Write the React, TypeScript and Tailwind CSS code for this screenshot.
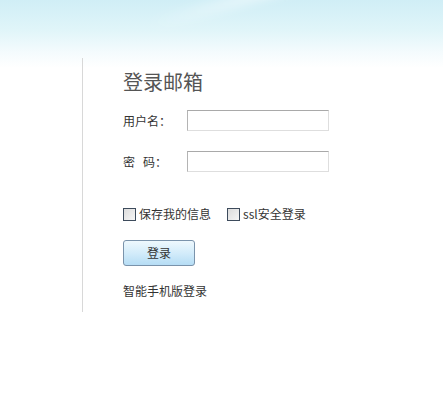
import React from "react";

const font = { fontFamily: '"Noto Sans CJK SC", "Noto Sans", sans-serif' };

function Check({ label }: { label: string }) {
  return (
    <label className="flex items-center text-[12px] leading-[14px] text-[#333]">
      <span className="block h-[13px] w-[13px] border border-[#3d4b5c] bg-[linear-gradient(135deg,#dcdcdc,#f6f6f6)]" />
      <span className="ml-[3px]">{label}</span>
    </label>
  );
}

export default function App() {
  return (
    <div
      className="relative h-[412px] w-[443px] overflow-hidden bg-white bg-[linear-gradient(180deg,#d0eef6_0px,#e0f5f9_30px,#f4fbfd_52px,#ffffff_68px)]"
      style={font}
    >
      <div className="pointer-events-none absolute left-[140px] top-[-30px] h-[14px] w-[360px] rotate-[-16deg] bg-[linear-gradient(90deg,rgba(255,255,255,0),rgba(255,255,255,0.7),rgba(255,255,255,0))] blur-[4px]" />
      <div className="relative pl-[82px] pt-[58px]">
        <div className="h-[254px] border-l border-[#d8d8d8] pl-[40px] pt-[12px]">
          <div className="text-[20px] leading-[24px] text-[#555]">登录邮箱</div>
          <div className="mt-[16px] flex items-center">
            <div className="w-[64px] text-[12px] leading-[14px] text-[#333]">
              用户名：
            </div>
            <div className="h-[21px] w-[142px] border border-t-[#a9a9a9] border-l-[#b4b4b4] border-r-[#dedede] border-b-[#dedede] bg-white" />
          </div>
          <div className="mt-[20px] flex items-center">
            <div className="flex w-[64px] text-[12px] leading-[14px] text-[#333]">
              <span>密</span>
              <span className="ml-[8px]">码：</span>
            </div>
            <div className="h-[21px] w-[142px] border border-t-[#a9a9a9] border-l-[#b4b4b4] border-r-[#dedede] border-b-[#dedede] bg-white" />
          </div>
          <div className="mt-[35px] flex items-center">
            <Check label="保存我的信息" />
            <div className="ml-[16px]">
              <Check label="ssl安全登录" />
            </div>
          </div>
          <button className="mt-[19px] flex h-[26px] w-[72px] items-center justify-center rounded-[3px] border border-[#7a93ab] bg-[linear-gradient(180deg,#eef8fd_0%,#d3ecfa_50%,#b6ddf5_100%)] text-[12px] leading-[14px] text-[#333]">
            登录
          </button>
          <div className="mt-[18px] text-[12px] leading-[14px] text-[#333]">智能手机版登录</div>
        </div>
      </div>
    </div>
  );
}
